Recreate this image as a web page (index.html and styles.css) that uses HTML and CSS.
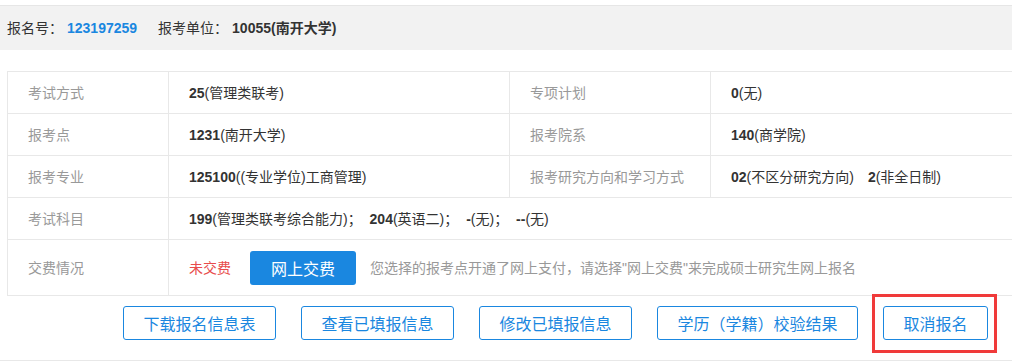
FILE: index.html
```html
<!DOCTYPE html>
<html lang="zh-CN">

<head>
    <meta charset="UTF-8">
    <meta name="viewport" content="width=device-width, initial-scale=1.0">
    <title>报名信息</title>
    <link rel="stylesheet" href="styles.css">
</head>

<body>

    <div class="info-bar">
        <span class="info-label">报名号：</span>
        <span class="info-num">123197259</span>
        <span class="info-label unit-label">报考单位：</span>
        <span class="info-value"><b>10055</b>(南开大学)</span>
    </div>

    <table class="detail-table">
        <colgroup>
            <col class="w-label">
            <col class="w-value">
            <col class="w-label2">
            <col class="w-value2">
        </colgroup>
        <tr>
            <td class="col-label">考试方式</td>
            <td><b>25</b>(管理类联考)</td>
            <td class="col-label">专项计划</td>
            <td><b>0</b>(无)</td>
        </tr>
        <tr>
            <td class="col-label">报考点</td>
            <td><b>1231</b>(南开大学)</td>
            <td class="col-label">报考院系</td>
            <td><b>140</b>(商学院)</td>
        </tr>
        <tr>
            <td class="col-label">报考专业</td>
            <td><b>125100</b>((专业学位)工商管理)</td>
            <td class="col-label">报考研究方向和学习方式</td>
            <td><b>02</b>(不区分研究方向)<span class="spacer"></span><b>2</b>(非全日制)</td>
        </tr>
        <tr>
            <td class="col-label">考试科目</td>
            <td colspan="3">
                <span class="subject"><b>199</b>(管理类联考综合能力)；</span>
                <span class="subject"><b>204</b>(英语二)；</span>
                <span class="subject"><b>-</b>(无)；</span>
                <span class="subject"><b>--</b>(无)</span>
            </td>
        </tr>
        <tr class="fee-row">
            <td class="col-label">交费情况</td>
            <td colspan="3">
                <div class="fee-box">
                    <span class="unpaid">未交费</span>
                    <button class="pay-btn">网上交费</button>
                    <span class="fee-note">您选择的报考点开通了网上支付，请选择"网上交费"来完成硕士研究生网上报名</span>
                </div>
            </td>
        </tr>
    </table>

    <div class="action-bar">
        <button class="action-btn">下载报名信息表</button>
        <button class="action-btn">查看已填报信息</button>
        <button class="action-btn">修改已填报信息</button>
        <button class="action-btn">学历（学籍）校验结果</button>
        <div class="mark-wrap">
            <button class="action-btn">取消报名</button>
            <span class="red-mark"></span>
        </div>
    </div>

</body>

</html>
```

FILE: styles.css
```css
html {
    overflow: hidden;
}

body {
    margin: 0;
    width: 1060px;
    font-family: "Liberation Sans", "Noto Sans CJK SC", sans-serif;
    font-size: 14px;
    color: #333;
    background-color: #fff;
}

.info-bar {
    margin-top: 5px;
    height: 45px;
    box-sizing: border-box;
    border-top: 1px solid #e6e6e6;
    background-color: #f2f2f2;
    padding-left: 7px;
    display: flex;
    align-items: center;
    line-height: 20px;
}

.info-num {
    margin-left: 4px;
    color: #1a87e0;
    font-weight: bold;
}

.unit-label {
    margin-left: 21px;
}

.info-value {
    margin-left: 4px;
    font-weight: bold;
}

.detail-table {
    margin-top: 21px;
    margin-left: 7px;
    width: 1050px;
    table-layout: fixed;
    border-collapse: collapse;
    line-height: 20px;
}

.w-label {
    width: 161px;
}

.w-value {
    width: 341px;
}

.w-label2 {
    width: 201px;
}

.w-value2 {
    width: 347px;
}

.detail-table td {
    border: 1px solid #e8e8e8;
    height: 42px;
    padding: 0 20px;
    box-sizing: border-box;
    white-space: nowrap;
}

.col-label {
    color: #999;
}

.spacer {
    display: inline-block;
    width: 14px;
}

.subject {
    margin-right: 4px;
}

.detail-table .fee-row td {
    height: 56px;
}

.fee-box {
    display: flex;
    align-items: center;
}

.unpaid {
    color: #e84c4c;
}

.pay-btn {
    margin-left: 19px;
    width: 106px;
    height: 34px;
    border: none;
    border-radius: 3px;
    background-color: #1a87e0;
    color: #fff;
    font-family: inherit;
    font-size: 16px;
    cursor: pointer;
}

.fee-note {
    margin-left: 14px;
    color: #999;
}

.action-bar {
    display: flex;
    gap: 25px;
    padding: 10px 0 20px 123px;
    border-bottom: 1px solid #e8e8e8;
}

.action-btn {
    height: 34px;
    padding: 0 19.5px;
    border: 1px solid #1a87e0;
    border-radius: 3px;
    background-color: #fff;
    color: #1a87e0;
    font-family: inherit;
    font-size: 16px;
    cursor: pointer;
}

.mark-wrap {
    position: relative;
    display: flex;
}

.red-mark {
    position: absolute;
    left: -11px;
    top: -12px;
    right: -9px;
    bottom: -13px;
    border: 3px solid #f03a3a;
}
```
